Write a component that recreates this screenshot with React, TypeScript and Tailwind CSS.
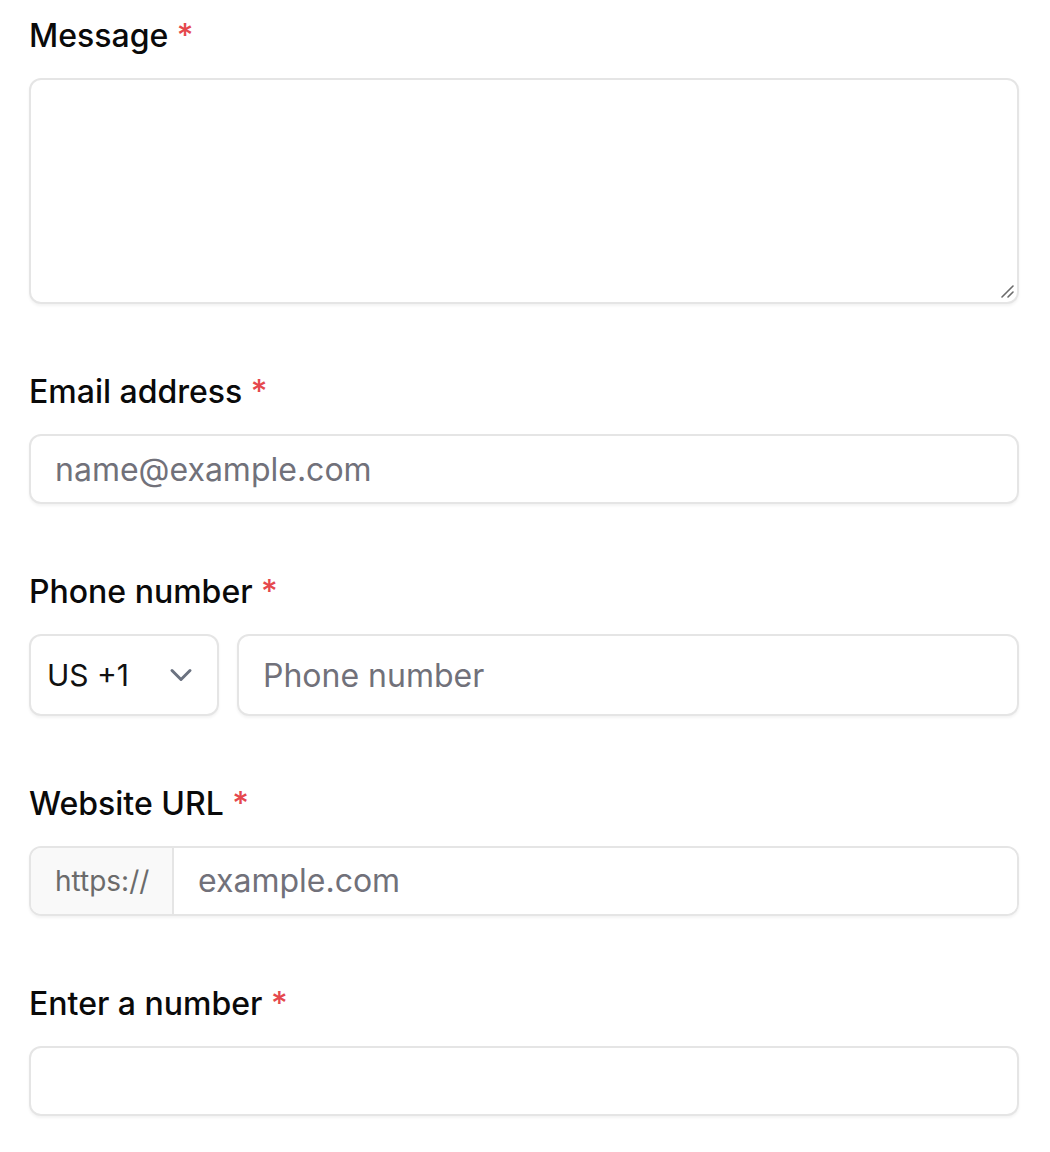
import { ChevronDown } from "lucide-react";

function Label(props: { text: string; htmlFor: string }) {
  return (
    <label
      htmlFor={props.htmlFor}
      className="block text-[32px] leading-[48px] font-medium text-[#0a0a0a]"
    >
      {props.text} <span className="text-[#e5484d]">*</span>
    </label>
  );
}

const inputBase =
  "w-full rounded-xl border-2 border-[#e5e5e5] bg-white px-[24px] text-[32px] text-[#111111] shadow-[0_2px_3px_rgba(0,0,0,0.05)] outline-none placeholder:text-[#71717a]";

function App(): JSX.Element {
  return (
    <div
      className="min-h-[1152px] bg-white pl-[29px] pt-[12px]"
      style={{ fontFamily: "Inter, 'Noto Sans', sans-serif" }}
    >
      <form className="flex w-[990px] flex-col gap-[64px]">
        <div className="flex flex-col gap-[18px]">
          <Label text="Message" htmlFor="message" />
          <div className="relative">
            <textarea
              id="message"
              className={inputBase + " block h-[226px] resize-none py-4"}
            />
            {/* resize grip */}
            <svg
              className="pointer-events-none absolute bottom-[6px] right-[5px]"
              width="14"
              height="14"
              viewBox="0 0 14 14"
            >
              <path
                d="M2 13 L13 2 M8 13 L13 8"
                stroke="#6b6b6b"
                strokeWidth="1.6"
                strokeLinecap="round"
              />
            </svg>
          </div>
        </div>

        <div className="flex flex-col gap-[18px]">
          <Label text="Email address" htmlFor="email" />
          <input
            id="email"
            type="email"
            placeholder="name@example.com"
            className={inputBase + " h-[70px]"}
          />
        </div>

        <div className="flex flex-col gap-[18px]">
          <Label text="Phone number" htmlFor="phone" />
          <div className="flex gap-[18px]">
            <div className="flex h-[82px] w-[190px] shrink-0 items-center justify-between rounded-xl border-2 border-[#e5e5e5] bg-white pl-[16px] pr-[18px] shadow-[0_2px_3px_rgba(0,0,0,0.05)]">
              <span className="text-[30px] text-[#111111]">US +1</span>
              <ChevronDown size={36} strokeWidth={2} className="text-[#6b7280]" />
            </div>
            <input
              id="phone"
              type="tel"
              placeholder="Phone number"
              className={inputBase + " h-[82px]"}
            />
          </div>
        </div>

        <div className="flex flex-col gap-[18px]">
          <Label text="Website URL" htmlFor="website" />
          <div className="flex h-[70px] overflow-hidden rounded-xl border-2 border-[#e5e5e5] shadow-[0_2px_3px_rgba(0,0,0,0.05)]">
            <span className="flex w-[143px] shrink-0 items-center border-r-2 border-[#e5e5e5] bg-[#f9f9f9] px-[24px] text-[28px] text-[#6b6b6b]">
              https://
            </span>
            <input
              id="website"
              type="text"
              placeholder="example.com"
              className="w-full bg-white px-[24px] text-[32px] text-[#111111] outline-none placeholder:text-[#71717a]"
            />
          </div>
        </div>

        <div className="flex flex-col gap-[18px]">
          <Label text="Enter a number" htmlFor="number" />
          <input id="number" type="number" className={inputBase + " h-[70px]"} />
        </div>
      </form>
    </div>
  );
}

export default App;
